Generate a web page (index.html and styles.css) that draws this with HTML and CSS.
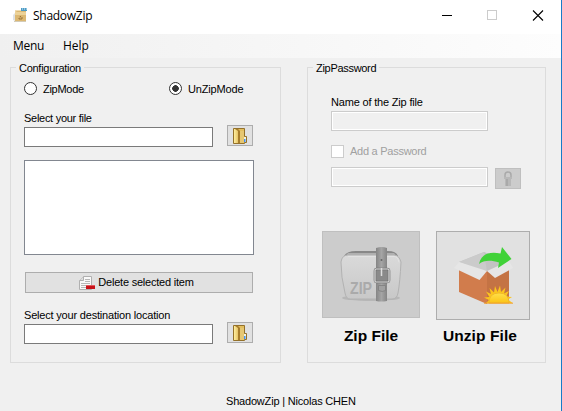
FILE: index.html
```html
<!DOCTYPE html>
<html lang="en">
<head>
<meta charset="utf-8">
<title>ShadowZip</title>
<link rel="stylesheet" href="styles.css">
</head>
<body>
<svg width="0" height="0" class="defs" aria-hidden="true">
  <defs>
    <linearGradient id="gold"><stop offset="0" stop-color="#ffef9f"/><stop offset="1" stop-color="#e6c468"/></linearGradient>
    <linearGradient id="pouch" x2="0" y2="1"><stop offset="0" stop-color="#dadada"/><stop offset="1" stop-color="#c8c8c8"/></linearGradient>
    <linearGradient id="strap"><stop offset="0" stop-color="#858585"/><stop offset=".5" stop-color="#a5a5a5"/><stop offset="1" stop-color="#858585"/></linearGradient>
    <linearGradient id="sun" x2="0" y2="1"><stop offset="0" stop-color="#ffe04a"/><stop offset="1" stop-color="#fbc316"/></linearGradient>
    <symbol id="folder" viewBox="0 0 15 16">
      <path d="M.5.5h11v8h2v6h-2v1h-11z" fill="#e3bf5e" stroke="#94712a"/>
      <path d="M1 1h4v14H1z" fill="url(#gold)"/>
      <path d="M7 3h4v12H7z" fill="#e6c772"/>
      <path d="M2 1l3 2v12h2V3L5 1z" fill="#a77d2c"/>
      <path d="M11 9h2v5h-2z" fill="#f5f3dc"/><path d="M11 11h1.500v3H11z" fill="#438ff0"/>
    </symbol>
  </defs>
</svg>
<div class="window">
  <header class="titlebar">
    <svg class="app-icon" viewBox="0 0 16 16" width="16" height="16">
      <path d="M2 2h9v5H2z" fill="#f0dcb0"/><path d="M8 0h6v3H8z" fill="#4c9ac4"/><path d="M9 1h1M11 1h1M13 1h1" stroke="#d9f1fb"/>
      <path d="M0 7l2-2v8l-2-1z" fill="#dfe2e4"/><path d="M2 4l2-1h9v10H2z" fill="#dcb872"/><path d="M2 4h11v3H2z" fill="#ecd298"/>
      <path d="M6.500 9h1v-1M9 9v2h-1M6 10v1h2" stroke="#8b642d" fill="none" stroke-width=".8"/><path d="M1 13.500h12" stroke="#d2cbb9"/>
    </svg>
    <span class="title">ShadowZip</span>
    <svg class="controls" viewBox="0 0 104 12" width="104" height="12">
      <path d="M0 5.500h10" stroke="#000"/><rect x="45.500" y=".5" width="9" height="9" fill="none" stroke="#ccc"/><path d="M91 .5l10 10M101 .5l-10 10" stroke="#000" stroke-width="1.100"/>
    </svg>
  </header>
  <nav class="menubar"><span class="menu">Menu</span><span class="help">Help</span></nav>
  <main>
    <fieldset class="config">
      <legend><span class="t-config">Configuration</span></legend>
      <div class="radios">
        <label class="zip-mode"><i class="radio"></i><span class="t-zip">ZipMode</span></label>
        <label><i class="radio on"></i><span class="t-unzip">UnZipMode</span></label>
      </div>
      <div class="picker">
        <div><span class="caption t-select">Select your file</span><div class="field"></div></div>
        <div class="button small"><svg width="15" height="16"><use href="#folder"/></svg></div>
      </div>
      <div class="list"></div>
      <div class="button delete">
        <svg viewBox="0 0 17 14" width="17" height="14"><path d="M4.500.5h8v13h-12v-9z" fill="#fafafa" stroke="#b0b0b0"/><path d="M.5 4.500h4v-4" fill="#ddd" stroke="#b0b0b0"/><path d="M6 3.500h5M6 5.500h5M2 7.500h9M2 9.500h5M2 11.500h5" stroke="#b8b8b8"/><path d="M7 9h9v4H7z" fill="#c81219"/><path d="M7 9.500h9" stroke="#e15a5e"/></svg>
        <span class="t-delete">Delete selected item</span>
      </div>
      <div class="picker destination">
        <div><span class="caption t-dest">Select your destination location</span><div class="field"></div></div>
        <div class="button small"><svg width="15" height="16"><use href="#folder"/></svg></div>
      </div>
    </fieldset>
    <fieldset class="password">
      <legend><span class="t-pass">ZipPassword</span></legend>
      <div class="form">
        <span class="caption t-name">Name of the Zip file</span>
        <div class="field disabled"></div>
        <label class="check"><i></i><span class="t-add">Add a Password</span></label>
        <div class="secret"><div class="field disabled"></div>
          <div class="button small off"><svg viewBox="0 0 10 16" width="10" height="16"><path d="M2 7V4a3 3 0 0 1 6 0v3" fill="none" stroke="#a9a9a9" stroke-width="1.500"/><path d="M1 6h8v2H8v7H2V8H1z" fill="#b8b8b8"/><path d="M3 8h2v7H3z" fill="#a9a9a9"/></svg></div>
        </div>
      </div>
      <div class="actions">
        <div class="action">
          <div class="button big off">
            <svg viewBox="0 0 64 56" width="64" height="56">
              <ellipse cx="32" cy="51" rx="29" ry="3" fill="#b7b7b7"/>
              <path d="M5 9Q8 4 17 4h32q8 0 10 5z" fill="#888"/>
              <path d="M9 6h46l4 5H5z" fill="#b0b0b0"/>
              <path d="M9 8h46q5 0 7 7-1 20-3 31-1 6-6 6H11q-4 0-5-6Q2 30 2 15q1-7 7-7z" fill="url(#pouch)" stroke="#b2b2b2"/>
              <path d="M9 9.500h46q4 0 5 6" fill="none" stroke="#e2e2e2"/>
              <path d="M37 1q6-2 11 0v53q-6 1-11 0z" fill="url(#strap)"/>
              <circle cx="42.500" cy="13" r="1" fill="#666"/><path d="M39.500 38.500h7v5q-3 2-7 0z" stroke="#7d7d7d" stroke-width=".8" fill="#a0a0a0"/>
              <rect x="36" y="22" width="14" height="13" rx="2" fill="#8a8a8a" stroke="#707070" stroke-width="2.600"/>
              <rect x="36" y="22" width="14" height="13" rx="1" fill="none" stroke="#ddd" stroke-width="1.200"/>
              <path d="M42.500 21v8" stroke="#ddd" stroke-width="1.500"/>
              <text x="11" y="47" class="pouch-text" textLength="22" lengthAdjust="spacingAndGlyphs">ZIP</text>
            </svg>
          </div>
          <span class="t-zipfile">Zip File</span>
        </div>
        <div class="action">
          <div class="button big unzip">
            <svg viewBox="0 0 60 60" width="60" height="60">
              <path d="M6 16L31 6l25 9-22 11z" fill="#c3c3c3"/><path d="M6 16L31 6l3 20z" fill="#cbcbcb"/>
              <path d="M6 23l28 2v33L6 46z" fill="#d17c4c"/><path d="M34 25l22-1v33H34z" fill="#c47344"/>
              <path d="M6 16l28 9-7.500 9L1 22z" fill="#e6e6e6"/><path d="M34 25l22-10 4 7-18 10z" fill="#e6e6e6"/>
              <path d="M26 18C28 9 35 5 47.500 7.500L49 1l9.500 12L45 22l1-5.500C38 14 31 14 26 18z" fill="#40d238"/>
              <path d="M33 57l3-3-5-2.500 5.500-.5-3.500-5.500 5 2.500-1.500-6 4.500 4.500 1-6.500 2.500 6 2.500-6.500 1 6.500 4.500-4.500-1.500 6 5-2.500-3 5.500 6 .5-4 2.500 4.500 3.500z" fill="#fcc51d"/>
              <path d="M36 57q0-10 10-10t10 10z" fill="url(#sun)" stroke="#eeb42b" stroke-width=".8"/><path d="M31 57.200h29" stroke="#f2a02c"/>
            </svg>
          </div>
          <span class="t-unzipfile">Unzip File</span>
        </div>
      </div>
    </fieldset>
  </main>
  <footer><span class="t-footer">ShadowZip | Nicolas CHEN</span></footer>
</div>
</body>
</html>
```
FILE: styles.css
```css
* { box-sizing: border-box; }
body { margin: 0; background: #f0f0f0; color: #000; font: 11px/13px "Liberation Sans", Arial, sans-serif; }
span { white-space: nowrap; }
svg { display: block; flex: none; }
.defs { position: absolute; }
.window { width: 562px; height: 411px; border-right: 1px solid #187bc8; display: flex; flex-direction: column; overflow: hidden; }
.titlebar { height: 34px; background: #fff; display: flex; padding: 8px 18px 0 13px; font: 12px/16px "Open Sans", sans-serif; }
.title { margin-left: 4px; letter-spacing: -.27px; }
.controls { margin: 2px -3px 0 auto; }
.menubar { height: 24px; padding: 4px 13px; font: 12px/16px "Open Sans", sans-serif; display: flex; gap: 19px; background: linear-gradient(90deg, #f0f0f0, #fdfdfd); }
.menu { letter-spacing: -.3px; }
.help { letter-spacing: -.1px; }
main { height: 305px; padding: 3px 15px 0 10px; display: flex; justify-content: space-between; }
fieldset { margin: 0; height: 302px; min-width: 0; border: 1px solid #dcdcdc; padding: 0 13px; }
legend { height: 13px; line-height: 15px; margin-left: -8px; padding: 0 3px; }
.config { width: 271px; }
.password { width: 239px; }
.radios { display: flex; padding-top: 8px; height: 38px; }
.radios label { display: flex; gap: 6px; height: 13px; line-height: 14px; }
.zip-mode { width: 145px; }
.radio { width: 13px; height: 13px; border: 1px solid #333; border-radius: 50%; background: #fff; }
.on { background: radial-gradient(circle, #333 0 3px, #fff 3.6px); }
.t-config { letter-spacing: -.27px; }
.t-zip { letter-spacing: -.27px; }
.t-unzip { letter-spacing: -.16px; }
.t-select { letter-spacing: -.28px; }
.t-delete { letter-spacing: -.22px; }
.t-dest { letter-spacing: -.19px; }
.t-pass { letter-spacing: -.3px; }
.t-name { letter-spacing: -.18px; }
.t-add { letter-spacing: -.26px; }
.t-footer { letter-spacing: -.19px; }
.picker { display: flex; justify-content: space-between; width: 229px; align-items: flex-end; }
.picker .small { margin-bottom: 1px; }
.caption { display: block; height: 15px; }
.field { width: 189px; height: 20px; border: 1px solid #7a7a7a; background: #fff; }
.button { display: flex; align-items: center; justify-content: center; border: 1px solid #adadad; background: #e1e1e1; }
.small { width: 26px; height: 21px; }
.list { width: 230px; height: 95px; margin-top: 13px; border: 1px solid #828790; background: #fff; }
.delete { width: 228px; height: 21px; margin: 17px 0 16px 1px; padding-right: 5px; gap: 2px; }
.off { background: #ccc; border-color: #bfbfbf; }
.form { padding: 22px 0 0 10px; }
.disabled { width: 157px; border-color: #ccc; background: #f0f0f0; box-shadow: inset 0 0 0 1px #fff; }
.check { display: flex; gap: 6px; margin: 14px 0 9px; color: #a0a0a0; }
.check i { width: 13px; height: 13px; border: 1px solid #ccc; background: #fff; }
.secret { display: flex; gap: 7px; height: 22px; }
.secret .small { margin-top: 1px; }
.actions { display: flex; gap: 16px; margin: 42px 0 0 1px; }
.action { display: flex; flex-direction: column; align-items: center; justify-content: space-between; height: 114px; font: bold 15.500px/18px "Liberation Sans", Arial, sans-serif; }
.big { width: 98px; height: 87px; }
.unzip { width: 94px; height: 89px; }
.t-unzipfile { letter-spacing: .1px; margin-right: 6px; }
.pouch-text { font: bold 17px "Liberation Sans", Arial, sans-serif; fill: #aaa; }
footer { height: 48px; padding: 32px 0 0 226px; }
```
